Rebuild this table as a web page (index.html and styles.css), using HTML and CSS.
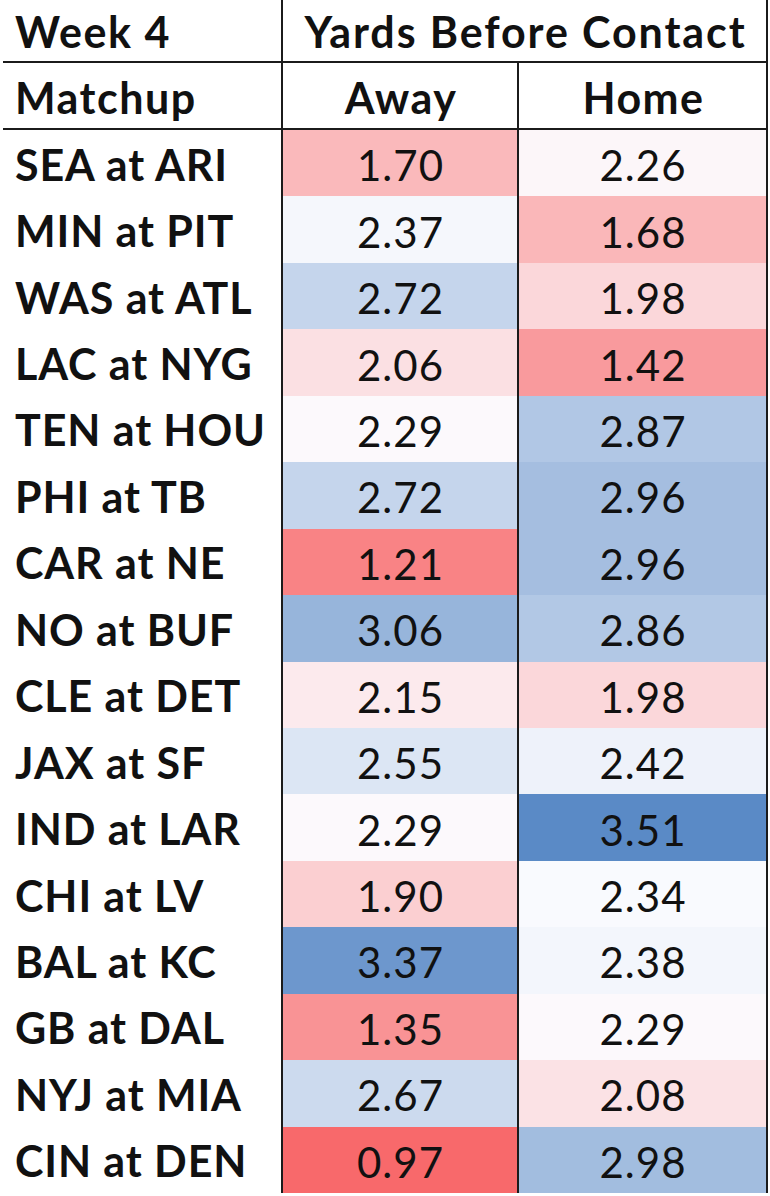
FILE: index.html
```html
<!DOCTYPE html>
<html>
<head>
<meta charset="utf-8">
<link rel="stylesheet" href="styles.css">
</head>
<body>
<div class="sheet">
  <div class="cell label head top">Week 4</div>
  <div class="cell title head top span2 wide">Yards Before Contact</div>
  <div class="cell label head">Matchup</div>
  <div class="cell title head mid">Away</div>
  <div class="cell title head last">Home</div>

  <div class="cell label team">SEA at ARI</div>
  <div class="cell num mid" style="background:rgb(250,185,187)">1.70</div>
  <div class="cell num last" style="background:rgb(252,246,249)">2.26</div>

  <div class="cell label team">MIN at PIT</div>
  <div class="cell num mid" style="background:rgb(245,247,252)">2.37</div>
  <div class="cell num last" style="background:rgb(250,183,185)">1.68</div>

  <div class="cell label team">WAS at ATL</div>
  <div class="cell num mid" style="background:rgb(197,213,236)">2.72</div>
  <div class="cell num last" style="background:rgb(251,215,218)">1.98</div>

  <div class="cell label team">LAC at NYG</div>
  <div class="cell num mid" style="background:rgb(251,224,227)">2.06</div>
  <div class="cell num last" style="background:rgb(249,154,157)">1.42</div>

  <div class="cell label team">TEN at HOU</div>
  <div class="cell num mid" style="background:rgb(252,249,252)">2.29</div>
  <div class="cell num last" style="background:rgb(177,199,229)">2.87</div>

  <div class="cell label team">PHI at TB</div>
  <div class="cell num mid" style="background:rgb(197,213,236)">2.72</div>
  <div class="cell num last" style="background:rgb(165,190,224)">2.96</div>

  <div class="cell label team">CAR at NE</div>
  <div class="cell num mid" style="background:rgb(249,131,133)">1.21</div>
  <div class="cell num last" style="background:rgb(165,190,224)">2.96</div>

  <div class="cell label team">NO at BUF</div>
  <div class="cell num mid" style="background:rgb(151,181,219)">3.06</div>
  <div class="cell num last" style="background:rgb(178,200,229)">2.86</div>

  <div class="cell label team">CLE at DET</div>
  <div class="cell num mid" style="background:rgb(252,234,237)">2.15</div>
  <div class="cell num last" style="background:rgb(251,215,218)">1.98</div>

  <div class="cell label team">JAX at SF</div>
  <div class="cell num mid" style="background:rgb(220,230,244)">2.55</div>
  <div class="cell num last" style="background:rgb(238,242,250)">2.42</div>

  <div class="cell label team">IND at LAR</div>
  <div class="cell num mid" style="background:rgb(252,249,252)">2.29</div>
  <div class="cell num last" style="background:rgb(90,138,198)">3.51</div>

  <div class="cell label team">CHI at LV</div>
  <div class="cell num mid" style="background:rgb(251,207,209)">1.90</div>
  <div class="cell num last" style="background:rgb(249,250,254)">2.34</div>

  <div class="cell label team">BAL at KC</div>
  <div class="cell num mid" style="background:rgb(109,151,205)">3.37</div>
  <div class="cell num last" style="background:rgb(243,246,252)">2.38</div>

  <div class="cell label team">GB at DAL</div>
  <div class="cell num mid" style="background:rgb(249,147,149)">1.35</div>
  <div class="cell num last" style="background:rgb(252,249,252)">2.29</div>

  <div class="cell label team">NYJ at MIA</div>
  <div class="cell num mid" style="background:rgb(204,218,238)">2.67</div>
  <div class="cell num last" style="background:rgb(251,226,229)">2.08</div>

  <div class="cell label team">CIN at DEN</div>
  <div class="cell num mid" style="background:rgb(248,105,107)">0.97</div>
  <div class="cell num last" style="background:rgb(162,189,223)">2.98</div>
</div>
</body>
</html>
```

FILE: styles.css
```css
* { box-sizing: border-box; }
html, body { margin: 0; padding: 0; background: #ffffff; }
body { font-family: Lato, "Open Sans", sans-serif; color: #111111; }

.sheet {
  margin-left: 3px;
  width: 765px;
  display: grid;
  grid-template-columns: 280px 236px 249px;
  grid-template-rows: 63px 67px repeat(16, 66.44px);
}

.cell {
  display: flex;
  align-items: center;
  white-space: nowrap;
}

.label {
  border-right: 2px solid #1b1b1b;
  padding-left: 12px;
  padding-top: 2px;
  font-weight: 700;
  font-size: 43px;
  letter-spacing: 1.5px;
}

.team { letter-spacing: 0.9px; }

.title {
  justify-content: center;
  font-weight: 700;
  font-size: 43px;
  letter-spacing: 1.5px;
  padding-left: 2px;
}

.wide { letter-spacing: 1.9px; }

.span2 {
  grid-column: 2 / span 2;
  border-right: 2px solid #1b1b1b;
}

.head { border-bottom: 2px solid #1b1b1b; padding-top: 4px; }
.top { padding-top: 1px; }

.num {
  justify-content: center;
  font-size: 42px;
  font-weight: 400;
  letter-spacing: 1px;
  padding-top: 4px;
  padding-left: 1px;
}

.mid { border-right: 2px solid #1b1b1b; }
.last { border-right: 2px solid #1b1b1b; }
```
